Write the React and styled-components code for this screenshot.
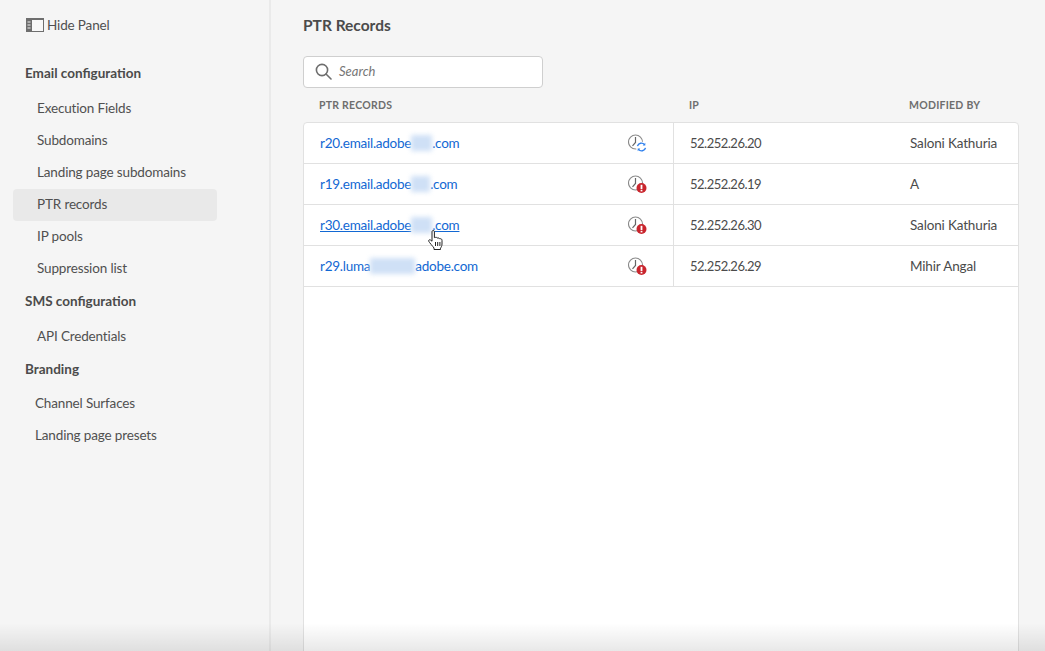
import styled, { createGlobalStyle } from "styled-components";

const Global = createGlobalStyle`
  html, body { margin: 0; padding: 0; height: 100%; overflow: hidden; }
  body { background: #f5f5f5; font-family: Lato, "Noto Sans", sans-serif; }
`;

const Page = styled.div`
  display: flex;
  width: 1045px;
  height: 651px;
  overflow: hidden;
  position: relative;
  background: #f5f5f5;
`;

const Fade = styled.div`
  position: absolute;
  left: 0;
  right: 0;
  bottom: 0;
  height: 28px;
  background: linear-gradient(rgba(0, 0, 0, 0), rgba(0, 0, 0, 0.09));
  pointer-events: none;
`;

const Sidebar = styled.aside`
  width: 269px;
  flex: none;
  border-right: 2px solid #eaeaea;
  box-sizing: content-box;
`;

const HidePanel = styled.div`
  display: flex;
  align-items: center;
  gap: 3px;
  height: 20px;
  margin: 15px 0 0 26px;
  font-size: 13.5px;
  letter-spacing: -0.15px;
  color: #505050;
`;

const Nav = styled.nav`
  display: flex;
  flex-direction: column;
  margin-top: 23px;
`;

const Group = styled.div`
  height: ${(p) => p.$h}px;
  margin-bottom: ${(p) => p.$after}px;
  padding: 0 0 2px 25px;
  box-sizing: border-box;
  display: flex;
  align-items: center;
  font-size: 13.5px;
  font-weight: 700;
  color: #4b4b4b;
`;

const Item = styled.div`
  display: flex;
  align-items: center;
  width: 204px;
  height: 32px;
  margin-left: 13px;
  padding: 0 0 2px ${(p) => p.$indent}px;
  box-sizing: border-box;
  border-radius: 4px;
  font-size: 13.5px;
  letter-spacing: -0.15px;
  color: #505050;
  background: ${(p) => (p.$active ? "#e9e9e9" : "transparent")};
`;

const Main = styled.main`
  flex: 1;
  min-width: 0;
  padding-left: 32px;
`;

const Title = styled.h1`
  margin: 14px 0 0;
  height: 22px;
  line-height: 22px;
  font-size: 15.5px;
  font-weight: 700;
  color: #4b4b4b;
`;

const SearchBox = styled.div`
  display: flex;
  align-items: center;
  gap: 7px;
  width: 240px;
  height: 32px;
  margin-top: 20px;
  padding: 0 0 2px 11px;
  box-sizing: border-box;
  background: #fff;
  border: 1px solid #cfcfcf;
  border-radius: 4px;
  font-size: 13px;
  font-style: italic;
  color: #767676;
`;

const HeadRow = styled.div`
  display: grid;
  grid-template-columns: 370px 220px 1fr;
  height: 34px;
  align-items: center;
  font-size: 10.5px;
  font-weight: 700;
  letter-spacing: 0.25px;
  color: #6e6e6e;
`;

const HeadCell = styled.div`
  padding-left: ${(p) => p.$pad}px;
`;

const Table = styled.div`
  width: 716px;
  height: 560px;
  box-sizing: border-box;
  background: #fff;
  border: 1px solid #e1e1e1;
  border-radius: 4px 4px 0 0;
`;

const Row = styled.div`
  display: grid;
  grid-template-columns: 370px 220px 1fr;
  height: 41px;
  box-sizing: border-box;
  border-bottom: 1px solid #e1e1e1;
  font-size: 13.5px;
  letter-spacing: -0.15px;
  color: #4b4b4b;
`;

const NameCell = styled.div`
  display: flex;
  align-items: center;
  justify-content: space-between;
  padding: 0 25px 0 16px;
  border-right: 1px solid #e1e1e1;
  position: relative;
`;

const RecordLink = styled.a`
  color: #1268d3;
  white-space: nowrap;
  letter-spacing: -0.25px;
  text-decoration: ${(p) => (p.$hover ? "underline" : "none")};
`;

const Blur = styled.span`
  display: inline-block;
  width: ${(p) => p.$w}px;
  height: 16px;
  vertical-align: -3px;
  background: #cfe0f6;
  filter: blur(2.5px);
`;

const Cell = styled.div`
  display: flex;
  align-items: center;
  padding-left: 16px;
  white-space: nowrap;
`;

const IpCell = styled(Cell)`
  font-size: 13px;
  letter-spacing: -0.5px;
`;

const Pointer = styled.svg`
  position: absolute;
  left: 124px;
  top: 25px;
`;

const SearchIcon = () => (
  <svg width="17" height="17" viewBox="0 0 17 17" fill="none" stroke="#6e6e6e" strokeWidth="1.6">
    <circle cx="7" cy="7" r="5.6" />
    <path d="M11 11l5 5" strokeLinecap="round" />
  </svg>
);

const PanelIcon = () => (
  <svg width="18" height="14" viewBox="0 0 18 14">
    <rect x="0" y="0" width="18" height="14" fill="#6e6e6e" />
    <rect x="6" y="2" width="11" height="11" fill="#f8f8f8" />
    <path d="M1.5 4h3M1.5 7h3M1.5 10h3" stroke="#f1f1f1" strokeWidth="1.2" />
  </svg>
);

const StatusIcon = ({ kind }) => (
  <svg width="20" height="20" viewBox="0 0 20 20" fill="none">
    <circle cx="7.500" cy="9" r="7" stroke="#8a8a8a" strokeWidth="1.1" />
    <path d="M7.500 4v5.500l-3 3.400" stroke="#666" strokeWidth="1.2" />
    {kind === "error" ? (
      <>
        <circle cx="13.500" cy="14" r="5" fill="#c9252d" />
        <rect x="12.600" y="10.800" width="1.800" height="4.200" fill="#fff" />
        <rect x="12.600" y="15.800" width="1.800" height="1.600" fill="#fff" />
      </>
    ) : (
      <>
        <circle cx="13.500" cy="14" r="5.600" fill="#fff" />
        <path d="M9.500 13.200a4 4 0 0 1 7-1.600M17.500 14.800a4 4 0 0 1-7 1.600" stroke="#2f80ed" strokeWidth="1.400" />
        <path d="M17.300 9.800v2.600h-2.600zM9.700 18.200v-2.600h2.600z" fill="#2f80ed" />
      </>
    )}
  </svg>
);

const HandCursor = () => (
  <Pointer width="16" height="20" viewBox="0 0 16 20">
    <path
      d="M4 1.600c0-1.400 2.400-1.400 2.400 0v6l1-.2c.8-.2 1.500 0 1.700.6l1-.1c.8 0 1.300.3 1.500.8l.8 0c1 0 1.600.7 1.600 1.700v3.600c0 1.800-.8 3.200-1.500 4.200v1.300H6v-1.500C5 16.500 1.300 12.500.8 11.300c-.5-1.200.6-2 1.700-1.300L4 11.200z"
      fill="#fff"
      stroke="#222"
      strokeWidth="1"
      strokeLinejoin="round"
    />
    <path d="M7.500 12v4M9.700 12v4M11.900 12v4" stroke="#222" strokeWidth="1" />
  </Pointer>
);

const rows = [
  { before: "r20.email.adobe", blur: 21, after: ".com", status: "sync", ip: "52.252.26.20", by: "Saloni Kathuria" },
  { before: "r19.email.adobe", blur: 19, after: ".com", status: "error", ip: "52.252.26.19", by: "A" },
  { before: "r30.email.adobe", blur: 21, after: ".com", status: "error", ip: "52.252.26.30", by: "Saloni Kathuria", hover: true },
  { before: "r29.luma", blur: 45, after: "adobe.com", status: "error", ip: "52.252.26.29", by: "Mihir Angal" },
];

export default function App() {
  return (
    <Page>
      <Global />
      <Sidebar>
        <HidePanel>
          <PanelIcon />
          Hide Panel
        </HidePanel>
        <Nav>
          <Group $h={32} $after={3}>Email configuration</Group>
          <Item $indent={24}>Execution Fields</Item>
          <Item $indent={24}>Subdomains</Item>
          <Item $indent={24}>Landing page subdomains</Item>
          <Item $indent={24} $active>PTR records</Item>
          <Item $indent={24}>IP pools</Item>
          <Item $indent={24}>Suppression list</Item>
          <Group $h={34} $after={2}>SMS configuration</Group>
          <Item $indent={24}>API Credentials</Item>
          <Group $h={34} $after={1}>Branding</Group>
          <Item $indent={22}>Channel Surfaces</Item>
          <Item $indent={22}>Landing page presets</Item>
        </Nav>
      </Sidebar>
      <Main>
        <Title>PTR Records</Title>
        <SearchBox>
          <SearchIcon />
          Search
        </SearchBox>
        <HeadRow>
          <HeadCell $pad={16}>PTR RECORDS</HeadCell>
          <HeadCell $pad={16}>IP</HeadCell>
          <HeadCell $pad={16}>MODIFIED BY</HeadCell>
        </HeadRow>
        <Table>
          {rows.map((r) => (
            <Row key={r.ip}>
              <NameCell>
                <RecordLink $hover={r.hover}>
                  {r.before}
                  <Blur $w={r.blur} />
                  {r.after}
                </RecordLink>
                <StatusIcon kind={r.status} />
                {r.hover && <HandCursor />}
              </NameCell>
              <IpCell>{r.ip}</IpCell>
              <Cell>{r.by}</Cell>
            </Row>
          ))}
        </Table>
      </Main>
      <Fade />
    </Page>
  );
}
